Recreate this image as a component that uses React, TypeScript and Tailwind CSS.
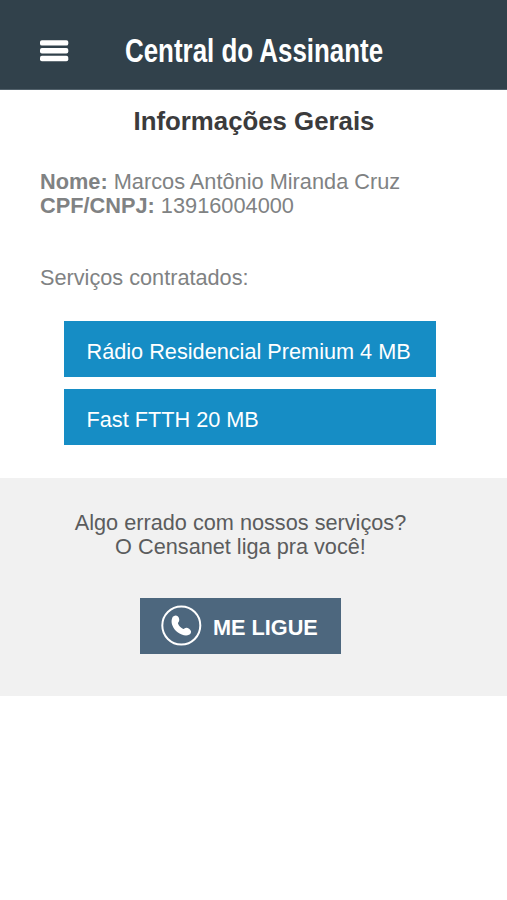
const services = ["Rádio Residencial Premium 4 MB", "Fast FTTH 20 MB"];

function MenuIcon() {
  return (
    <svg className="block" width="29" height="22" viewBox="0 0 29 22" fill="white">
      <rect x="0" y="0.2" width="28.3" height="5.4" rx="1.9" />
      <rect x="0" y="8" width="28.3" height="5.4" rx="1.9" />
      <rect x="0" y="15.8" width="28.3" height="5.4" rx="1.9" />
    </svg>
  );
}

function PhoneIcon() {
  return (
    <svg className="shrink-0" width="41" height="41" viewBox="0 0 41 41" fill="none">
      <circle cx="20.3" cy="20.5" r="19" stroke="white" strokeWidth="2" />
      <path
        d="M11.2 12.9C12.1 10.7 15.1 9.8 16.7 11.3C18.1 12.6 18.7 14.8 18 16.3C17.5 17.3 16.8 17.7 17 18.6C17.7 21 20 23.3 22.3 23.9C23.3 24.1 23.9 22.9 25.3 22.8C27 22.7 29.2 24.3 29.9 25.9C30.5 27.3 29.5 29 28 29.8C24.9 31.4 20 29.9 16.6 27.2C12.5 24 9.1 18 11.2 12.9Z"
        fill="white"
      />
    </svg>
  );
}

export default function App() {
  return (
    <div className="h-[900px] w-[507px] overflow-hidden bg-white font-['Liberation_Sans',Arial,sans-serif] text-[#808283]">
      <header className="flex h-[90px] items-center border-b border-[#52616b] bg-[#31414b] pt-[13px] pl-10 text-white">
        <button aria-label="Menu">
          <MenuIcon />
        </button>
        <h1 className="ml-14 origin-left scale-x-[0.785] pb-0.5 text-[33px] leading-none font-bold whitespace-nowrap">
          Central do Assinante
        </h1>
      </header>
      <main>
        <section className="h-[388px] px-10 pt-4">
          <h2 className="pl-px text-center text-[25.8px] leading-[30px] font-bold text-[#3b3b3c]">Informações Gerais</h2>
          <div className="mt-[34px] text-[21.75px] leading-6">
            <p><b>Nome:</b> Marcos Antônio Miranda Cruz</p>
            <p><b>CPF/CNPJ:</b> 13916004000</p>
          </div>
          <p className="mt-12 text-[21.7px] leading-6">Serviços contratados:</p>
          <ul className="mt-[31px] ml-6 flex w-[372px] flex-col gap-3">
            {services.map((service) => (
              <li key={service} className="flex h-14 items-center bg-[#168dc5] pt-1.5 pl-[22.5px] text-[21.7px] whitespace-nowrap text-white">
                {service}
              </li>
            ))}
          </ul>
        </section>
        <section className="flex h-[218px] flex-col items-center bg-[#f1f1f1] pt-[33px] pr-[26px] text-center text-[21.7px] leading-6 text-[#5b5c5d]">
          <p>Algo errado com nossos serviços?<br />O Censanet liga pra você!</p>
          <button className="mt-[39px] flex h-14 w-[201px] items-center gap-[11px] bg-[#4d677e] pb-0.5 pl-[21px] font-bold text-white">
            <PhoneIcon />
            <span className="pt-1.5">ME LIGUE</span>
          </button>
        </section>
      </main>
    </div>
  );
}
